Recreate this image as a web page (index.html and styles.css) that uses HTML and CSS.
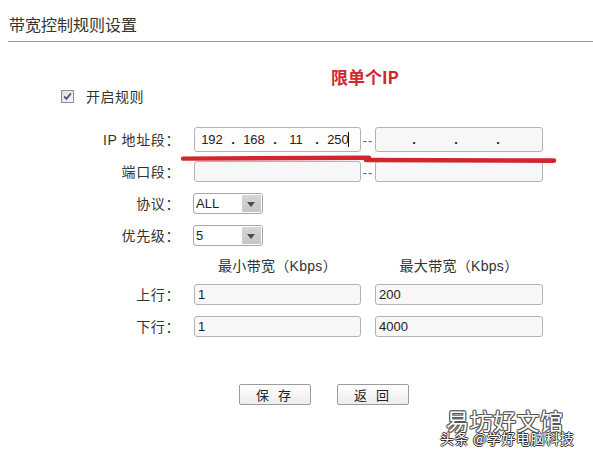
FILE: index.html
```html
<!DOCTYPE html>
<html lang="zh-CN">
<head>
<meta charset="utf-8">
<title>带宽控制规则设置</title>
<link rel="stylesheet" href="styles.css">
</head>
<body>
<div class="page">
  <h1 class="title">带宽控制规则设置</h1>

  <div class="form">
    <label class="enable">
      <span class="check">
        <svg width="13" height="13" viewBox="0 0 13 13">
          <defs>
            <linearGradient id="cb" x1="0" y1="0" x2="1" y2="1">
              <stop offset="0" stop-color="#dcdcdc"/>
              <stop offset="1" stop-color="#f8f8f8"/>
            </linearGradient>
          </defs>
          <rect x="0.5" y="0.5" width="12" height="12" fill="url(#cb)" stroke="#8e8f8f"/>
          <path d="M3.2 6.4 L5.4 8.9 L9.9 3.4" fill="none" stroke="#4a5a78" stroke-width="1.8"/>
        </svg>
      </span>
      开启规则
    </label>

    <div class="row row-ip">
      <span class="lbl">IP 地址段：</span>
      <div class="field ip ip-active">
        <span class="oct">192</span><span class="dot">.</span><span class="oct">168</span><span class="dot">.</span><span class="oct">11</span><span class="dot">.</span><span class="oct">250<span class="caret"></span></span>
      </div>
      <span class="sep">--</span>
      <div class="field ip">
        <span class="oct"></span><span class="dot">.</span><span class="oct"></span><span class="dot">.</span><span class="oct"></span><span class="dot">.</span><span class="oct"></span>
      </div>
    </div>

    <div class="row">
      <span class="lbl">端口段：</span>
      <div class="field"></div>
      <span class="sep">--</span>
      <div class="field"></div>
    </div>

    <div class="row">
      <span class="lbl">协议：</span>
      <div class="select"><span class="val">ALL</span><span class="arrow"></span></div>
    </div>

    <div class="row">
      <span class="lbl">优先级：</span>
      <div class="select"><span class="val">5</span><span class="arrow"></span></div>
    </div>

    <div class="row row-head">
      <span class="lbl"></span>
      <span class="head">最小带宽（Kbps）</span>
      <span></span>
      <span class="head">最大带宽（Kbps）</span>
    </div>

    <div class="row">
      <span class="lbl">上行：</span>
      <div class="field">1</div>
      <span></span>
      <div class="field">200</div>
    </div>

    <div class="row">
      <span class="lbl">下行：</span>
      <div class="field">1</div>
      <span></span>
      <div class="field">4000</div>
    </div>

    <div class="actions">
      <button class="btn" type="button">保 存</button>
      <button class="btn" type="button">返 回</button>
    </div>
  </div>

  <!-- hand-drawn annotation over the form -->
  <div class="note">限单个IP</div>
  <svg class="stroke" width="593" height="454" viewBox="0 0 593 454">
    <path d="M183 158.6 C 260 158, 330 157.6, 369 157.8" fill="none" stroke="#d0262d" stroke-width="4.4" stroke-linecap="round"/>
    <path d="M366 160 C 440 160, 500 160.2, 554 160.6" fill="none" stroke="#d0262d" stroke-width="4.6" stroke-linecap="round"/>
  </svg>

  <div class="watermark">
    <span class="wm-big">易坊好文馆</span>
    <span class="wm-small">头条 @学好电脑科技</span>
  </div>
</div>
</body>
</html>
```

FILE: styles.css
```css
html, body {
  margin: 0;
  padding: 0;
  background: #ffffff;
}

body {
  font-family: "Liberation Sans", "Noto Sans CJK SC", sans-serif;
  font-size: 14px;
  color: #333333;
}

.page {
  position: relative;
  width: 593px;
  height: 454px;
  overflow: hidden;
}

.title {
  margin: 0 0 0 8px;
  padding: 14px 0 3px 1px;
  font-size: 16px;
  font-weight: normal;
  line-height: 24px;
  color: #333333;
  border-bottom: 1px solid #9a9a9a;
}

.form {
  display: flex;
  flex-direction: column;
}

.enable {
  display: flex;
  align-items: center;
  gap: 12px;
  height: 24px;
  margin-top: 42px;
  padding-left: 61px;
  color: #333333;
  letter-spacing: 0.5px;
}

.check {
  display: block;
  width: 13px;
  height: 13px;
}

.check svg {
  display: block;
}

.row {
  display: grid;
  grid-template-columns: 194px 167px 14px 168px;
  align-items: center;
  height: 32px;
}

.row-ip {
  height: 32px;
  margin-top: 15px;
}

.row-head {
  height: 27px;
}

.lbl {
  text-align: right;
  padding-right: 14px;
  white-space: nowrap;
  letter-spacing: 0.6px;
}

.field {
  box-sizing: border-box;
  height: 21px;
  padding-left: 3px;
  border: 1px solid #b3b3b3;
  border-radius: 3px;
  background: #f7f7f7;
  font-size: 13px;
  line-height: 19px;
  color: #222222;
}

.ip {
  display: flex;
  height: 25px;
  line-height: 23px;
  padding-left: 2px;
}

.ip-active {
  background: #fdfdfd;
}

.oct {
  position: relative;
  width: 30px;
  text-align: center;
}

.dot {
  width: 12px;
  text-align: center;
  font-weight: bold;
}

.caret {
  position: absolute;
  right: 4px;
  top: 4px;
  width: 1px;
  height: 15px;
  background: #111111;
}

.sep {
  color: #666666;
  font-size: 13px;
  padding-top: 3px;
  text-align: center;
  letter-spacing: 1px;
}

.select {
  box-sizing: border-box;
  display: flex;
  align-items: center;
  justify-content: space-between;
  width: 70px;
  height: 21px;
  margin-left: -1px;
  padding: 1px;
  border: 1px solid #a8a8a8;
  border-radius: 3px;
  background: #ffffff;
  font-size: 13px;
  color: #222222;
}

.select .val {
  padding-left: 1px;
}

.arrow {
  position: relative;
  width: 19px;
  height: 17px;
  background: linear-gradient(#d6d6d6, #c6c6c6);
  border-radius: 1px;
}

.arrow::after {
  content: "";
  position: absolute;
  left: 5px;
  top: 7px;
  border-left: 4px solid transparent;
  border-right: 4px solid transparent;
  border-top: 5px solid #4a4a4a;
}

.head {
  text-align: center;
  color: #333333;
  white-space: nowrap;
  letter-spacing: 0.3px;
}

.actions {
  display: flex;
  gap: 26px;
  margin-top: 42px;
  padding-left: 239px;
}

.btn {
  box-sizing: border-box;
  width: 72px;
  height: 21px;
  padding: 0;
  border: 1px solid #9c9c9c;
  border-radius: 2px;
  background: linear-gradient(#ffffff, #ececec);
  font-family: "Noto Sans CJK SC", sans-serif;
  font-size: 13px;
  line-height: 19px;
  letter-spacing: 3px;
  color: #222222;
}

/* red annotation drawn over the form */
.note {
  position: absolute;
  left: 331px;
  top: 65px;
  font-family: "Noto Sans CJK SC", sans-serif;
  font-size: 17px;
  font-weight: bold;
  line-height: 24px;
  color: #d0262d;
}

.stroke {
  position: absolute;
  left: 0;
  top: 0;
  pointer-events: none;
}

/* outlined site watermark in the corner */
.watermark {
  position: absolute;
  left: 438px;
  top: 400px;
  width: 150px;
  height: 50px;
  font-family: "Noto Sans CJK SC", sans-serif;
  color: #ffffff;
}

.wm-big {
  position: absolute;
  left: 8px;
  top: 10px;
  font-size: 23px;
  line-height: 20px;
  letter-spacing: 0.5px;
  text-shadow: -1px 0 #555, 1px 0 #555, 0 -1px #555, 0 1px #555,
               -1px -1px #777, 1px 1px #777, -1px 1px #777, 1px -1px #777;
}

.wm-small {
  position: absolute;
  left: 2px;
  top: 31px;
  font-size: 14px;
  line-height: 14px;
  letter-spacing: 0.6px;
  white-space: nowrap;
  text-shadow: -1px 0 #333, 1px 0 #333, 0 -1px #333, 0 1px #333;
}
```
